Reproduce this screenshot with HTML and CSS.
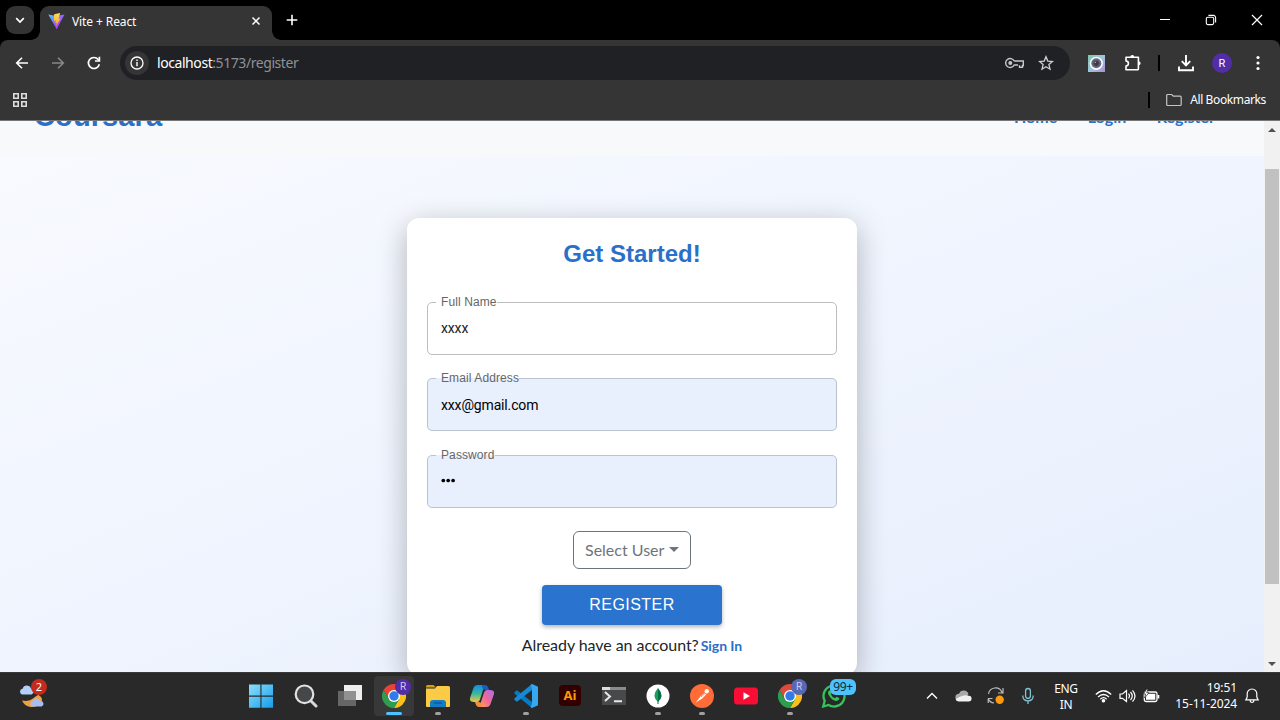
FILE: index.html
```html
<!DOCTYPE html>
<html lang="en">
<head>
<meta charset="utf-8">
<title>Vite + React</title>
<link rel="stylesheet" href="styles.css">
</head>
<body>
<div class="screen">
  <div class="tabstrip">
    <div class="tab-search"><svg width="10" height="10" viewBox="0 0 10 10"><path d="M1.2 3.2 5 7l3.800-3.800" fill="none" stroke="#fff" stroke-width="1.700"/></svg></div>
    <div class="tab">
      <svg class="favicon" width="17" height="17" viewBox="0 0 17 17">
        <defs>
          <linearGradient id="vite" x1="0" y1="0" x2="1" y2="1"><stop offset="0" stop-color="#41d1ff"/><stop offset=".6" stop-color="#a04dff"/><stop offset="1" stop-color="#bd34fe"/></linearGradient>
          <linearGradient id="bolt" x1="0" y1="0" x2="0" y2="1"><stop offset="0" stop-color="#ffdf60"/><stop offset="1" stop-color="#ffa800"/></linearGradient>
        </defs>
        <path d="M.3 1.600 8.400 3l8.100-1.400L8.700 16.300z" fill="url(#vite)"/>
        <path d="M12.200 0 6.200 1.200 5.800 7.800l2-.3-.5 2.400 1.400-.4-.6 3.500L12.500 5.400l-2 .3z" fill="url(#bolt)"/>
      </svg>
      <span class="tab-title">Vite + React</span>
      <svg class="tab-close" width="10" height="10" viewBox="0 0 10 10"><path d="m1.500 1.500 7 7M8.500 1.500l-7 7" stroke="#fff" stroke-width="1.500"/></svg>
    </div>
    <svg class="new-tab" width="12" height="12" viewBox="0 0 12 12"><path d="M6 .7v10.600M.7 6h10.600" stroke="#fff" stroke-width="1.600"/></svg>
    <div class="window-controls">
      <svg width="12" height="12" viewBox="0 0 12 12"><path d="M1 5.500h10" stroke="#fff"/></svg>
      <svg width="12" height="12" viewBox="0 0 12 12" fill="none" stroke="#fff" stroke-width="1.100"><rect x="1.300" y="3.200" width="7.400" height="7.400" rx="1.500"/><path d="M3.400 1.400h5A2.200 2.200 0 0 1 10.600 3.600v5"/></svg>
      <svg width="12" height="12" viewBox="0 0 12 12"><path d="m1 1 10 10M11 1 1 11" stroke="#fff" stroke-width="1.200"/></svg>
    </div>
  </div>

  <div class="toolbar">
    <svg width="16" height="16" viewBox="0 0 16 16" fill="none" stroke="#fff" stroke-width="1.600"><path d="M14 8H3M8 2.700 2.700 8 8 13.300"/></svg>
    <svg width="16" height="16" viewBox="0 0 16 16" fill="none" stroke="#888" stroke-width="1.600"><path d="M2 8h11M8 2.700 13.300 8 8 13.300"/></svg>
    <svg width="16" height="16" viewBox="0 0 16 16" fill="none" stroke="#fff" stroke-width="1.700"><path d="M13.300 9.200A5.500 5.500 0 1 1 12.200 4.500L13 5.400"/><path d="M13.400 1.700V6H9"/></svg>
    <div class="omnibox">
      <div class="site-info"><svg width="14" height="14" viewBox="0 0 14 14"><circle cx="7" cy="7" r="6" fill="none" stroke="#fff" stroke-width="1.300"/><path d="M7 6v4.200M7 3.600v1.400" stroke="#fff" stroke-width="1.400"/></svg></div>
      <span class="url"><span class="host">localhost</span><span class="path">:5173/register</span></span>
      <svg class="key" width="20" height="12" viewBox="0 0 20 12" fill="none" stroke="#c7c7c7" stroke-width="1.400"><path d="M9.200 4A4.500 4.500 0 1 0 9.200 8H13M9.200 4H18.300V8.500H17.500V10.300H14.500V8.200"/><circle cx="5.300" cy="6" r="1.300" fill="#c7c7c7"/></svg>
      <svg class="star" width="16" height="16" viewBox="0 0 16 16"><path d="m8 1.700 1.800 4.400 4.700.4L10.900 9.600l1.100 4.600L8 11.700l-4 2.500 1.100-4.600L1.500 6.500l4.700-.4z" fill="none" stroke="#d0d0d0" stroke-width="1.300"/></svg>
    </div>
    <svg class="ext" width="17" height="17" viewBox="0 0 17 17"><defs><linearGradient id="cam" x1="0" y1="0" x2="1" y2="1"><stop offset="0" stop-color="#79c8ad"/><stop offset=".5" stop-color="#9cc7db"/><stop offset="1" stop-color="#a98fda"/></linearGradient></defs><rect width="17" height="17" fill="url(#cam)"/><circle cx="8.300" cy="8.300" r="6.600" fill="#fff"/><circle cx="8.300" cy="8.300" r="5" fill="#6b6a80"/><circle cx="8.300" cy="8.300" r="2.900" fill="#3b3a48" stroke="#55536a"/><circle cx="7.300" cy="7.300" r=".6" fill="#ddd"/></svg>
    <svg class="puzzle" width="18" height="18" viewBox="0 0 18 18"><path d="M2 3.200H14.400V14.900Q14.400 15.800 13.500 15.800H2V12Q4.400 11.500 4.400 9.400T2 6.900z" fill="none" stroke="#fff" stroke-width="1.600" stroke-linejoin="round"/><path d="M6.300 3A2 2 0 0 1 10.300 3zM14.600 7.300A2 2 0 0 1 14.600 11.300z" fill="#fff"/></svg>
    <i class="sep sep-top"></i>
    <svg class="download" width="18" height="18" viewBox="0 0 18 18" fill="none" stroke="#fff" stroke-width="1.900"><path d="M9 1v10M4.800 7.200 9 11.400l4.200-4.200M2 12.500v3.700h14v-3.700"/></svg>
    <span class="avatar">R</span>
    <svg class="menu" width="4" height="16" viewBox="0 0 4 16" fill="#fff"><circle cx="2" cy="2.500" r="1.600"/><circle cx="2" cy="8" r="1.600"/><circle cx="2" cy="13.500" r="1.600"/></svg>
  </div>

  <div class="bookmarks">
    <svg width="16" height="16" viewBox="0 0 16 16" fill="none" stroke="#ddd" stroke-width="1.600"><path d="M1.800 1.800h4.400v4.400H1.800zM9.800 1.800h4.400v4.400H9.800zM1.800 9.800h4.400v4.400H1.800zM9.800 9.800h4.400v4.400H9.800z"/></svg>
    <i class="sep sep-bookmarks"></i>
    <svg class="folder" width="16" height="14" viewBox="0 0 16 14"><path d="M1.700 1.500h4l1.600 1.700h6.900q1 0 1 1v7.300q0 1-1 1H1.700q-1 0-1-1v-9q0-1 1-1z" fill="none" stroke="#c4c4c4" stroke-width="1.200"/></svg>
    <span class="all-bookmarks">All Bookmarks</span>
  </div>

  <div class="viewport">
    <div class="page">
      <header class="navbar">
        <span class="brand">Coursara</span>
        <nav class="links"><a>Home</a><a>Login</a><a>Register</a></nav>
      </header>
      <main class="hero">
        <form class="card">
          <h1 class="card-title">Get Started!</h1>
          <fieldset class="field"><legend>Full Name</legend><span class="value muted">xxxx</span></fieldset>
          <fieldset class="field filled"><legend>Email Address</legend><span class="value">xxx@gmail.com</span></fieldset>
          <fieldset class="field filled"><legend>Password</legend><span class="value dots"><svg width="15" height="5" viewBox="0 0 15 5"><circle cx="2.300" cy="2.500" r="1.850"/><circle cx="7.200" cy="2.500" r="1.850"/><circle cx="12.100" cy="2.500" r="1.850"/></svg></span></fieldset>
          <button class="select" type="button"><span>Select User</span><i class="caret"></i></button>
          <button class="submit" type="button">REGISTER</button>
          <p class="signin"><span class="ask">Already have an account?</span> <a>Sign In</a></p>
        </form>
      </main>
    </div>
    <div class="scrollbar"><i class="arrow up"></i><i class="thumb"></i><i class="arrow down"></i></div>
  </div>

  <footer class="taskbar">
    <div class="weather">
      <svg width="30" height="28" viewBox="0 0 30 28"><path d="M4 11.500a3 3 0 0 1 .6-5.800 4.600 4.600 0 0 1 8.600-.3 3.100 3.100 0 0 1 .3 6.100z" fill="#b4cff8"/><path d="M4 17.500q7 1.500 11-2t5.500-3.500q5 3 3 7-3.500 5.500-11 5Q6.500 23 4 17.500" fill="#f0a137"/><path d="M14 23.500a2.800 2.800 0 0 1 .5-5.400 4.200 4.200 0 0 1 7.900 0 2.800 2.800 0 0 1 1.300 5.400z" fill="#a5bdf0"/></svg>
      <span class="count">2</span>
    </div>
    <div class="apps">
      <div class="app"><svg width="24" height="24" viewBox="0 0 24 24"><defs><linearGradient id="win" x1="0" y1="0" x2="1" y2="1"><stop offset="0" stop-color="#8be0fb"/><stop offset="1" stop-color="#159dec"/></linearGradient></defs><path d="M0 .5h11.400v11.100H0zM12.500.5H24v11.100H12.500zM0 12.700h11.400v11.100H0zM12.500 12.700H24v11.100H12.500z" fill="url(#win)"/></svg></div>
      <div class="app"><svg width="24" height="24" viewBox="0 0 24 24"><path d="m17 17 5 5" stroke="#d8d8d8" stroke-width="3" stroke-linecap="round"/><circle cx="10.500" cy="10.300" r="8.800" fill="#454749" stroke="#e2e2e2" stroke-width="2.200"/></svg></div>
      <div class="app"><svg width="24" height="24" viewBox="0 0 24 24"><path d="M6 1h18v15H6z" fill="#eee"/><path d="M0 7h18v15H0z" fill="#777" fill-opacity=".78"/></svg></div>
      <div class="app active">
        <svg width="24" height="24" viewBox="0 0 24 24"><path d="M12 24A12 12 0 0 0 22.400 6H12L17.200 15z" fill="#fbc116"/><path d="M12 6h10.400A12 12 0 0 0 1.600 6L6.800 15z" fill="#ea4335"/><path d="M1.600 6A12 12 0 0 0 12 24L17.200 15 6.800 15z" fill="#2f9d4e"/><circle cx="12" cy="12" r="6" fill="#fff"/><circle cx="12" cy="12" r="4.700" fill="#2f7bea"/></svg>
        <span class="profile">R</span><i class="run on"></i>
      </div>
      <div class="app"><svg width="24" height="24" viewBox="0 0 24 24"><path d="M0 2.500Q0 1 1.500 1h6l2.500 2.500H0z" fill="#d99d12"/><path d="M0 4.500h9L11 2h11.500Q24 2 24 3.500V22q0 1-1 1H1q-1 0-1-1z" fill="#fccb45"/><path d="M4 23v-4q0-3 3-3h10q3 0 3 3v4z" fill="#147cc4"/><path d="M8 19h8" stroke="#07559b" stroke-width="1.300"/></svg><i class="run"></i></div>
      <div class="app"><svg width="24" height="24" viewBox="0 0 24 24"><defs><linearGradient id="cpa" x1="0" y1="0" x2="0" y2="1"><stop offset="0" stop-color="#1689e3"/><stop offset=".5" stop-color="#35b7a2"/><stop offset="1" stop-color="#f3c63e"/></linearGradient><linearGradient id="cpb" x1="1" y1="0" x2="0" y2="1"><stop offset="0" stop-color="#a770ed"/><stop offset=".5" stop-color="#f0669c"/><stop offset="1" stop-color="#ffa553"/></linearGradient></defs><path d="M7.500 1H15l-2 5-3 9.500Q9.200 18 7 18H4q-5 0-4-4L3.500 4Q4.500 1 7.500 1z" fill="url(#cpa)"/><path d="M16.500 23H9l2-5 3-9.500Q14.800 6 17 6h3q5 0 4 4l-3.500 10q-1 3-4 3z" fill="url(#cpb)"/><path d="M12 1h3q3 0 4 5h-4q-2 0-3-3z" fill="#185cc5"/><path d="M12 23H9q-3 0-4-5h4q2 0 3 3z" fill="#f2903e"/></svg></div>
      <div class="app"><svg width="24" height="24" viewBox="0 0 24 24"><path d="M.5 8 3 6.200 18 18v6L.5 9.700z" fill="#0879c5"/><path d="M.5 16 3 17.800 18 6V0L.5 14.300z" fill="#168bd4"/><path d="M18 0l6 2.700v18.600L18 24l-1.500-1 1.500-3V4l-1.500-3z" fill="#35a8f0"/></svg><i class="run"></i></div>
      <div class="app"><span class="ai">Ai</span></div>
      <div class="app"><svg width="24" height="24" viewBox="0 0 24 24"><path d="M0 3h24v18H0z" fill="#47494b"/><path d="M0 3h24v3H0z" fill="#8b8b8b"/><path d="M0 3h8v3H0z" fill="#ddd"/><path d="m3 8 5 4.500L3 17M12 17.300h8" fill="none" stroke="#e8e8e8" stroke-width="2"/></svg></div>
      <div class="app"><svg width="24" height="24" viewBox="0 0 24 24"><circle cx="12" cy="12" r="11.500" fill="#fff"/><path d="M12 4q-7 8 0 14z" fill="#16a05a"/><path d="M12 4q7 8 0 14z" fill="#0a6b48"/><path d="M12 16v4" stroke="#0a6b48"/></svg><i class="run"></i></div>
      <div class="app"><svg width="24" height="24" viewBox="0 0 24 24"><circle cx="12" cy="12" r="12" fill="#ff6c37"/><path d="m5.500 18.700 5-6.200 4-3.500 1.700 1.500-4 4z" fill="#fff"/><circle cx="16.700" cy="7.200" r="2.200" fill="#fff"/><path d="m11 13 4-3.500" stroke="#ff6c37" stroke-width=".7"/></svg><i class="run"></i></div>
      <div class="app"><svg width="24" height="24" viewBox="0 0 24 24"><rect y="3.500" width="24" height="17" rx="3.500" fill="#f80d35"/><path d="m9.500 8.200 6.500 3.800-6.500 3.800z" fill="#fff"/></svg></div>
      <div class="app">
        <svg width="24" height="24" viewBox="0 0 24 24"><path d="M12 24A12 12 0 0 0 22.400 6H12L17.200 15z" fill="#fbc116"/><path d="M12 6h10.400A12 12 0 0 0 1.600 6L6.800 15z" fill="#d94b3c"/><path d="M1.600 6A12 12 0 0 0 12 24L17.200 15 6.800 15z" fill="#2f9d4e"/><circle cx="12" cy="12" r="6" fill="#fff"/><circle cx="12" cy="12" r="4.700" fill="#2f7bea"/></svg>
        <span class="profile blue">R</span><i class="run"></i>
      </div>
      <div class="app"><svg width="26" height="24" viewBox="0 0 26 24"><path d="m2.200 22.500 1.500-5.700A10.500 10.500 0 1 1 7.500 20.900z" fill="none" stroke="#35c45b" stroke-width="2.300"/><path d="M8 6.500q-2 2 0 5 3 5 7.500 5.500 2.500 0 3-2.700l-3-1.500-1.500 1.500q-3-1-4.200-4l1-1.300-1-2.500z" fill="#35c45b"/></svg><span class="unread">99+</span></div>
    </div>
    <div class="tray">
      <svg class="chevron" width="12" height="8" viewBox="0 0 12 8"><path d="m1 6.500 5-5 5 5" fill="none" stroke="#fff" stroke-width="1.400"/></svg>
      <svg class="cloud" width="17" height="12" viewBox="0 0 17 12"><path d="M4 11a3.600 3.600 0 0 1 0-7.200A5 5 0 0 1 13.500 4l-3 4z" fill="#aaa"/><path d="M3.500 11.500Q1 11.300.8 9q4-3 8-3.500 3.500-.5 5 .2A2.900 2.900 0 0 1 13.500 11.500z" fill="#f2f2f2"/></svg>
      <svg class="sync" width="18" height="18" viewBox="0 0 18 18"><path d="M1.500 7A7 7 0 0 1 15 5.500M16 1v5h-5M1 11.500h4.500M1.200 16v-4.500A7 7 0 0 0 7 16" fill="none" stroke="#bbb" stroke-width="1.200"/><circle cx="12.700" cy="12.700" r="4.200" fill="#ff9a0c"/></svg>
      <svg class="mic" width="12" height="18" viewBox="0 0 12 18" fill="none" stroke="#7fc3d2" stroke-width="1.300"><rect x="3.600" y="1.500" width="4.800" height="10" rx="2.400"/><path d="M.8 8.500q0 5.300 5.200 5.300t5.200-5.300M6 14v3"/></svg>
      <span class="lang"><span>ENG</span><span>IN</span></span>
      <svg class="wifi" width="17" height="14" viewBox="0 0 17 14" fill="none" stroke="#fff" stroke-width="1.200"><path d="M.8 5.500Q8.500-2 16.200 5.500M3 8q5.500-5 11 0M5.300 10.200q3.200-3 6.400 0"/><circle cx="8.500" cy="11.700" r="1.200" fill="#fff"/></svg>
      <svg class="volume" width="17" height="14" viewBox="0 0 17 14" fill="none" stroke="#fff" stroke-width="1.200"><path d="M1 5h2.500L7.500 1.500v11L3.500 9.300H1zM9.500 4.700q2 2.300 0 4.600M11.500 3q3.500 4 0 8M13.500 1.300q5 5.700 0 11.400"/></svg>
      <svg class="battery" width="17" height="15" viewBox="0 0 17 15"><rect x="1.300" y="3" width="12.700" height="9.500" rx="1.800" fill="none" stroke="#fff" stroke-width="1.300"/><path d="M3 4.800h9.300v6H3zM14.500 6h1.800v3.500h-1.800z" fill="#fff"/><path d="M3.700 0 .5 5h2L1.600 9 6 3.700H3.700L5 0z" fill="#fff" stroke="#29292a" stroke-width=".7"/></svg>
      <span class="clock"><span class="time">19:51</span><span class="date">15-11-2024</span></span>
      <svg class="bell" width="14" height="16" viewBox="0 0 14 16" fill="none" stroke="#fff" stroke-width="1.200"><path d="M7 1a4.800 4.800 0 0 0-4.800 4.800V9L.9 11.800h12.200L11.800 9V5.800A4.800 4.800 0 0 0 7 1zM5 12.500q.5 2 2 2t2-2"/></svg>
    </div>
  </footer>
</div>
</body>
</html>
```

FILE: styles.css
```css
* { box-sizing: border-box; }
body { margin: 0; }
svg { display: block; flex: none; }
.screen { width: 1280px; height: 720px; overflow: hidden; display: flex; flex-direction: column; background: #000; font-family: "Noto Sans", sans-serif; color: #fff; }

.tabstrip { height: 40px; flex: none; display: flex; align-items: flex-start; padding-left: 6px; background: #000; }
.tab-search { width: 28px; height: 28px; margin-top: 6px; border-radius: 9px; background: #333; display: flex; align-items: center; justify-content: center; }
.tab { position: relative; width: 232px; height: 34px; margin: 6px 0 0 6px; border-radius: 9px 9px 0 0; background: #353535; display: flex; align-items: center; padding: 0 11px 4px 8px; }
.tab::before, .tab::after { content: ""; position: absolute; bottom: 0; width: 9px; height: 9px; }
.tab::before { left: -9px; background: radial-gradient(circle at 0 0, #000 8.5px, #353535 9px); }
.tab::after { right: -9px; background: radial-gradient(circle at 100% 0, #000 8.5px, #353535 9px); }
.tab-title { margin: 2px 0 0 7px; font-size: 12px; line-height: 16px; letter-spacing: -0.1px; white-space: nowrap; }
.tab-close { margin-left: auto; }
.new-tab { margin: 14px 0 0 14px; }
.window-controls { margin: 14px 17px 0 auto; display: flex; gap: 34px; }

.toolbar { height: 46px; flex: none; display: flex; align-items: center; padding-left: 14px; background: #353535; border-radius: 8px 8px 0 0; }
.toolbar > svg + svg { margin-left: 20px; }
.omnibox { width: 950px; height: 34px; margin-left: 18px; border-radius: 17px; background: #202124; display: flex; align-items: center; padding-left: 5px; }
.site-info { width: 24px; height: 24px; border-radius: 12px; background: #353535; display: flex; align-items: center; justify-content: center; }
.url { margin-left: 8px; font-size: 14px; line-height: 20px; letter-spacing: -0.43px; white-space: nowrap; }
.path { color: #8f9194; }
.key { margin-left: auto; }
.star { margin: 0 16px 0 13px; }
.toolbar .ext { margin-left: 18px; }
.toolbar .puzzle { margin-left: 19px; }
.sep { display: block; width: 2px; height: 16px; background: #000; }
.sep-top { margin-left: 16px; }
.download { margin-left: 17px; }
.avatar { width: 20px; height: 20px; margin-left: 17px; border-radius: 50%; background: #512da8; font: 11px/21px "Roboto", sans-serif; text-align: center; }
.menu { margin-left: 24px; }

.bookmarks { height: 35px; flex: none; display: flex; align-items: center; padding: 0 14px 6px 12px; background: #353535; border-bottom: 1px solid #777; }
.sep-bookmarks { margin-left: auto; }
.folder { margin-left: 16px; }
.all-bookmarks { margin-left: 8px; font-size: 12px; line-height: 16px; letter-spacing: -0.38px; white-space: nowrap; }

.viewport { height: 551px; flex: none; display: flex; overflow: hidden; background: #f1f1f1; }
.page { width: 1264px; overflow: hidden; }
.navbar { height: 73px; margin-top: -38.5px; padding: 0 49px 6px 34px; background: #f8f9fb; display: flex; align-items: center; color: #2a70ca; }
.brand { font: bold 29.2px/36px "Liberation Sans", sans-serif; }
.links { margin: 1px 0 0 auto; display: flex; gap: 30.5px; font: bold 16px/24px "Lato", sans-serif; }
.hero { height: 540px; padding-top: 62.5px; background: linear-gradient(158deg, #f8faff, #e6eefd); display: flex; justify-content: center; align-items: flex-start; }
.card { width: 450px; height: 457px; padding: 20px; border-radius: 12px; background: #fff; box-shadow: 0 8px 30px rgba(0, 0, 0, .28); display: flex; flex-direction: column; align-items: center; }
.card > * { flex: none; }
.card-title { margin: 0; font: bold 24px/32px "Liberation Sans", sans-serif; color: #2a70ca; }
.field { width: 410px; height: 59px; margin: 17.7px 0 0; padding: 0 8px; border: 1px solid #bdbdbd; border-radius: 5px; min-inline-size: 0; }
.card-title + .field { margin-top: 25.8px; }
.field legend { padding: 0 0 0 5px; font: 12px/13px "Liberation Sans", sans-serif; letter-spacing: .1px; color: #666; }
.filled { background: #e8effd; border-color: #bcc3d0; }
.value { display: block; margin: 11px 5px 0; font: 14px/18px "Roboto", sans-serif; letter-spacing: -0.15px; color: #000; }
.muted { margin-top: 10px; color: #222; }
.dots { padding-top: 5px; }
.select { height: 38px; width: 118px; margin: 22.7px 0 0; padding: 0 11px; border: 1px solid #6c757d; border-radius: 6px; background: #fff; display: flex; align-items: center; font: 16px/24px "Lato", sans-serif; color: #6c757d; white-space: nowrap; }
.caret { margin-left: auto; border: 5px solid transparent; border-top-color: #6c757d; border-bottom: 0; }
.submit { width: 180px; height: 40px; flex: none; margin: 16px 0 0; border: 0; border-radius: 4px; background: #2a73ce; box-shadow: 0 2px 4px rgba(0, 0, 0, .3); font: 16px/24px "Liberation Sans", sans-serif; letter-spacing: .45px; color: #fff; }
.signin { margin: 8px 0 0; font: 16px/24px "Lato", sans-serif; letter-spacing: -0.06px; color: #212529; white-space: nowrap; }
.signin a { font-weight: bold; font-size: 14px; color: #2a70ca; margin-left: -2px; }
.scrollbar { width: 16px; display: flex; flex-direction: column; align-items: center; background: #f1f1f1; }
.arrow { border: 4px solid transparent; }
.up { border-bottom: 4px solid #505050; border-top: 0; margin-top: 7px; }
.thumb { width: 14px; height: 415px; margin-top: 37px; background: #c1c1c1; }
.down { border-top: 4px solid #505050; border-bottom: 0; margin: auto 0 6px; }

.taskbar { height: 48px; flex: none; display: flex; align-items: center; background: #29292a; border-top: 1px solid #38383a; }
.weather { position: relative; width: 30px; margin-left: 18px; }
.count { position: absolute; left: 13px; top: -4px; width: 16px; height: 16px; border-radius: 8px; background: #c42b1c; font-size: 11px; line-height: 16px; text-align: center; }
.apps { display: flex; align-items: center; gap: 4px; margin: 0 0 1px 193px; }
.app { position: relative; width: 40px; height: 40px; display: flex; align-items: center; justify-content: center; border-radius: 4px; }
.app:first-child { margin-right: 1px; }
.active { background: #383839; }
.profile { position: absolute; left: 21px; top: 3px; width: 16px; height: 16px; border-radius: 8px; background: #512da8; color: #d4c8f2; font: 10px/16px "Roboto", sans-serif; text-align: center; }
.blue { background: #5867b6; }
.run { position: absolute; left: 17px; bottom: 1px; width: 6px; height: 3px; border-radius: 2px; background: #a0a0a0; }
.on { left: 12px; width: 16px; background: #4cc2ff; }
.ai { width: 22px; height: 21px; margin-top: -1px; border-radius: 4px; background: #330000; color: #ff9a00; font: bold 13px/21px "Open Sans", sans-serif; text-align: center; }
.unread { position: absolute; left: 16px; top: 3px; width: 26px; height: 16px; border-radius: 6px; background: #4cc2ff; color: #0d2c3d; font-size: 12px; line-height: 16px; text-align: center; letter-spacing: -0.3px; }
.tray { margin: 0 0 0 auto; padding-right: 21px; display: flex; align-items: center; font-size: 12px; line-height: 16px; white-space: nowrap; }
.tray > svg { margin-bottom: 1px; }
.tray .cloud { margin-left: 17px; }
.sync { margin-left: 15px; }
.mic { margin-left: 17px; }
.lang { width: 30px; margin-left: 17px; display: flex; flex-direction: column; align-items: center; letter-spacing: -0.3px; }
.wifi { margin-left: 14px; }
.volume { margin-left: 7px; }
.battery { margin-left: 7px; }
.clock { width: 70px; margin: 0 0 1px 7px; display: flex; flex-direction: column; align-items: flex-end; letter-spacing: -0.1px; }
.bell { margin-left: 8px; }
```
